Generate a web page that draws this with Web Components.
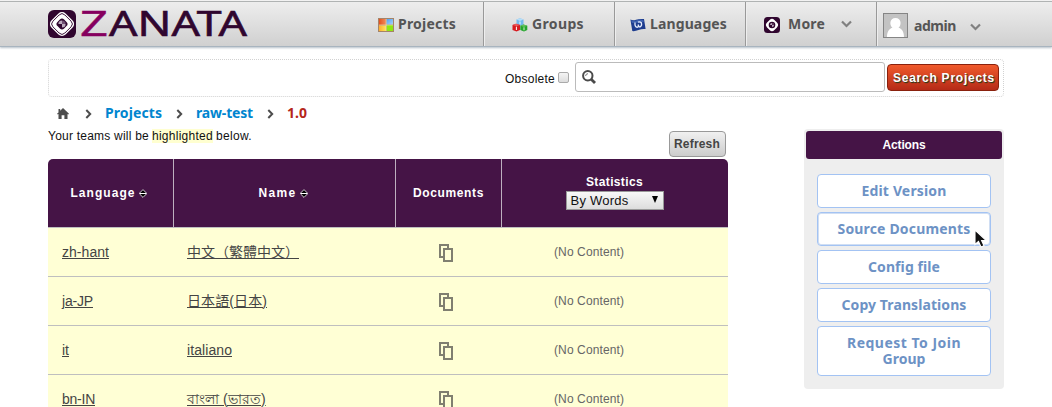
<!DOCTYPE html>
<html lang="en">
<head>
<meta charset="utf-8">
<title>Zanata: raw-test 1.0</title>
<style>
body { margin: 0; background: #fff; height: 407px; overflow: hidden; font: 12px "Liberation Sans", "Noto Sans CJK SC", sans-serif; color: #111; }
</style>
</head>
<body>
<zanata-page></zanata-page>
<script>
function component(name, html, setup) {
  customElements.define(name, class extends HTMLElement {
    connectedCallback() {
      if (this.shadowRoot) return;
      const root = this.attachShadow({ mode: "open" });
      const t = document.createElement("template");
      t.innerHTML = typeof html === "function" ? html(this) : html;
      root.append(t.content.cloneNode(true));
      if (setup) setup(this, root);
    }
  });
}

/* Icons, chosen by the "name" attribute */
const emblem = `
  <rect width="28" height="28" rx="6" fill="#30062f"/>
  <rect x="4" y="4" width="20" height="20" rx="5" transform="rotate(45 14 14)" fill="#fff"/>
  <rect x="5.600" y="5.600" width="16.800" height="16.800" rx="4" transform="rotate(45 14 14)" fill="none" stroke="#30062f" stroke-width=".9"/>
  <rect x="9.300" y="9.300" width="9.400" height="9.400" rx="3" transform="rotate(45 14 14)" fill="#30062f"/>
  <path d="M14 14V10.400A3.600 3.600 0 0 0 10.400 14ZM14 14V17.600A3.600 3.600 0 0 0 17.600 14Z" fill="#bba9bd"/>
  <path d="M14 14V10.400A3.600 3.600 0 0 1 17.600 14Z" fill="#705073"/>`;
const icons = {
  emblem: [28, 28, emblem],
  projects: [16, 14, `
    <defs><linearGradient id="r" x2="1"><stop stop-color="#e5501e"/><stop offset="1" stop-color="#f08c5c"/></linearGradient>
    <linearGradient id="b" x2="1" y2="1"><stop stop-color="#4f9fee"/><stop offset="1" stop-color="#a9d3fa"/></linearGradient>
    <linearGradient id="y" x2="1"><stop stop-color="#ffae2c"/><stop offset="1" stop-color="#ffe45a"/></linearGradient></defs>
    <rect width="16" height="14" fill="#a58468"/><rect x="1" y="1" width="7" height="6" fill="url(#r)"/>
    <rect x="8.500" y="1" width="6.500" height="5.500" fill="url(#b)"/><rect x="1" y="7.500" width="7" height="5.500" fill="url(#y)"/>
    <rect x="8.500" y="7" width="6.500" height="6" fill="#8fe812"/>
    <path d="M8.200 1V13M1 7H15" stroke="#f4e7bd" stroke-width=".6"/>`],
  groups: [16, 14, `
    <path d="M4.500 1.500L8 .3L11.500 1.500V6.500L8 8L4.500 6.500Z" fill="#73b9ed"/><path d="M4.500 1.500L8 .3L11.500 1.500L8 3Z" fill="#b7def8"/><path d="M8 3.500V6.500" stroke="#d9effc" stroke-width="1.200"/>
    <path d="M.5 7L4 5.800L8 7V12L4.500 13.500L.5 12Z" fill="#d71b20"/><path d="M.5 7L4 5.800L8 7L4.500 8.300Z" fill="#e85a5a"/><path d="M4.400 8.700V12" stroke="#fff" stroke-width="1"/>
    <path d="M8.300 7.800L11.500 6.500L15.300 7.800V12L12 13.500L8.300 12Z" fill="#24a52b"/><path d="M8.300 7.800L11.500 6.500L15.300 7.800L12 9Z" fill="#62bf5c"/><path d="M12 9.300V12.300" stroke="#d4f2d0" stroke-width="1"/>`],
  languages: [16, 14, `
    <path d="M.4 1.500Q3 2.800 6 1.700T14 1L15.600 11Q12 10.500 8.500 12T2.300 13Z" fill="#1d3c8e"/>
    <path d="M1 2.200Q4 3.300 7 2.200T13.400 2L13.800 4Q8 5 2 5Z" fill="#3d60ae"/>
    <path d="M5 4.500Q4.600 9.300 7.200 9.300Q8.600 9.300 8.300 6.500Q8.600 9.300 10.200 8.800Q12.300 8 11.300 4.800Q10 3.300 8 4.200" fill="none" stroke="#e6edfc" stroke-width="1.300"/>`],
  more: [16, 16, `<rect width="16" height="16" rx="3.500" fill="#30062f"/>
    <rect x="2.800" y="2.800" width="10.400" height="10.400" rx="3.400" transform="rotate(45 8 8)" fill="#fff"/>
    <circle cx="8" cy="8" r="3.300" fill="#30062f"/><path d="M8 8V6A2 2 0 0 0 6 8ZM8 8V10A2 2 0 0 0 10 8Z" fill="#bba9bd"/><circle cx="9" cy="7" r=".8" fill="#8a6e8c"/>`],
  avatar: [25, 25, `<rect x=".5" y=".5" width="24" height="24" fill="#c3c3c3" stroke="#858585"/>
    <path d="M4 24C4 18.500 6.500 15.500 9.500 14.800C6.300 12.500 6.300 5 12.500 5S18.700 12.500 15.500 14.800C18.500 15.500 21 18.500 21 24Z" fill="#fff"/>`],
  down: [11, 8, `<path d="M1 1.500L5.500 6L10 1.500" fill="none" stroke="#808080" stroke-width="2.200"/>`],
  right: [7, 10, `<path d="M1.300 1L5.200 5L1.300 9" fill="none" stroke="#4d4d4d" stroke-width="2"/>`],
  home: [12, 11, `<path d="M6 0L12 5.800L11.200 6.600L10.500 6V11H7.400V7.300H4.600V11H1.500V6L.8 6.600L0 5.800L1.500 4.400V1H3.200V2.700Z" fill="#4d4d4d"/>`],
  search: [14, 14, `<circle cx="5.800" cy="5.800" r="4.700" fill="none" stroke="#4a4a4a" stroke-width="2"/><path d="M9.200 9.200L13 13" stroke="#4a4a4a" stroke-width="2.800"/><path d="M3.600 6A2.400 2.400 0 0 1 6 3.700" fill="none" stroke="#666" stroke-width=".9"/>`],
  sort: [8, 9, `<path d="M4 .6L7.400 4V5L4 8.400L.6 5V4Z" fill="#000" stroke="#e8e0e8" stroke-width=".9"/><path d="M1 4.500H7" stroke="#fff"/>`],
  docs: [14, 18, `<path d="M4 13H1V1H9V4" fill="none" stroke="#807f70" stroke-width="2"/><path d="M5 5H13V17H5Z" fill="none" stroke="#807f70" stroke-width="2"/>`],
  pointer: [14, 19, `<path d="M1 1V15.500L4.500 12.500L7 18L10 16.700L7.600 11.500H12.300Z" fill="#111" stroke="#fff" stroke-width="1.100"/>`]
};
component("z-icon", el => {
  const [w, h, art] = icons[el.getAttribute("name")];
  return `<style>:host{display:block;flex:none;width:${w}px;height:${h}px}svg{display:block}</style>
  <svg width="${w}" height="${h}" viewBox="0 0 ${w} ${h}">${art}</svg>`;
});

/* Wordmark */
component("zanata-logo", `<style>
  :host{display:flex;gap:5px;align-items:center;width:200px;height:28px}
  svg{display:block;overflow:visible}
  text{font-family:"Noto Sans",sans-serif;font-size:34px}
  </style><z-icon name="emblem"></z-icon>
  <svg width="167" height="28"><text x="-1" y="26.300" fill="#86005f" textLength="28" lengthAdjust="spacingAndGlyphs" stroke="#86005f" stroke-width=".4">Z</text><text x="28" y="26.300" fill="#30062f" stroke="#30062f" stroke-width=".6" textLength="138" lengthAdjust="spacingAndGlyphs">ANATA</text></svg>`);

/* Top navigation */
component("nav-item", `<style>
  :host{display:flex;box-sizing:border-box;width:131px;height:44px;align-items:center;border-left:1px solid #999;box-shadow:inset 1px 0 #eee;
  font:bold 14px/20px "Noto Sans",sans-serif;color:#555;gap:4px}
  </style><slot></slot>`);
component("top-bar", `<style>
  :host{display:flex;box-sizing:border-box;height:47px;padding-left:48px;align-items:center;
   background:linear-gradient(#eee,#d0d0d0);border-top:1px solid #f2f2f2;border-bottom:1px solid #a8b4bf;
   box-shadow:inset 0 1px #b0b3b3,0 1px 2px #b6c0c9}
  nav{display:flex;margin:1px 0 0 auto}
  nav-item:first-child{border-color:transparent;box-shadow:none;padding-left:25px}
  nav-item>z-icon:first-child{margin-top:2px}
  .g{padding-left:28px}.l{padding-left:15px}.m{padding-left:18px;gap:8px}.m z-icon+z-label+z-icon{margin-left:8px}
  .u{width:176px;padding-left:6px;gap:6px}.u z-label{position:relative;top:2px}.u z-icon:last-child{margin:5px 0 0 8px}
  </style>
  <zanata-logo></zanata-logo>
  <nav>
  <nav-item><z-icon name="projects"></z-icon><z-label w="58">Projects</z-label></nav-item>
  <nav-item class="g"><z-icon name="groups"></z-icon><z-label w="52">Groups</z-label></nav-item>
  <nav-item class="l"><z-icon name="languages"></z-icon><z-label w="77">Languages</z-label></nav-item>
  <nav-item class="m"><z-icon name="more"></z-icon><z-label w="37">More</z-label><z-icon name="down"></z-icon></nav-item>
  <nav-item class="u"><z-icon name="avatar"></z-icon><z-label w="42">admin</z-label><z-icon name="down"></z-icon></nav-item>
  </nav>`);

/* Project search */
component("search-bar", `<style>
  :host{display:flex;box-sizing:border-box;width:956px;height:38px;margin:12px 0 0 48px;border:1px dotted #d2d2d2;border-radius:4px;
   justify-content:flex-end;align-items:center;padding-right:4px}
  z-label{margin-top:1px}
  input{appearance:none;width:11px;height:11px;margin:0 6px 2px 3px;border:1px solid #aaa;border-radius:2px;background:linear-gradient(#f4f4f4,#ddd)}
  .field{box-sizing:border-box;width:310px;height:30px;margin-right:2px;margin-top:-2px;border:1px solid #bbb;border-radius:3px;padding:7px 6px}
  button{box-sizing:border-box;width:112px;height:27px;margin-top:-1px;padding:0 5px;border:1px solid #8a210d;border-radius:4px;background:linear-gradient(#f05a2c,#b52a17);
   font:bold 12px/24px "Liberation Sans",sans-serif;color:#fff;text-shadow:1px 1px 1px #14381a;text-align:left}
  button z-label{margin:0}
  </style><z-label w="50">Obsolete</z-label><input type="checkbox"><div class="field"><z-icon name="search"></z-icon></div>
  <button><z-label w="102">Search Projects</z-label></button>`);

component("bread-crumbs", `<style>
  :host{display:flex;align-items:center;height:20px;padding-left:9px;margin-top:6px;font:bold 14px/20px "Noto Sans",sans-serif;color:#0085cf}
  z-icon{margin:2px 13px 0 14px} z-icon:first-of-type{margin:1px 2px 0 0}
  .now{color:#b5261a}
  </style><z-icon name="home"></z-icon><z-icon name="right"></z-icon><z-label w="57">Projects</z-label>
  <z-icon name="right"></z-icon><z-label w="57">raw-test</z-label><z-icon name="right"></z-icon><z-label class="now" w="20">1.0</z-label>`);

/* Languages table */
component("head-cell", `<style>
  :host{display:flex;align-items:center;justify-content:center;gap:3px;box-sizing:border-box;border-left:1px solid #bdb0bf;height:68px;
  font:bold 12px/16px "Liberation Sans",sans-serif;color:#fff}
  :host(.first){border:0}
  </style><slot></slot>`);
component("language-row", el => `<style>
  :host{display:grid;grid-template-columns:125px 222px 106px 227px;height:48px;border-top:1px solid #bfbfbf;background:#ffffd5;align-items:center;color:#444}
  a{font-size:14px;line-height:20px;padding-left:14px;margin-top:-1px;white-space:nowrap}
  a z-label{text-decoration:underline;text-underline-offset:1px;text-decoration-thickness:1px}
  z-icon{margin:2px auto 0 44px}
  .stat{padding-left:53px;color:#666;line-height:16px}
  </style><a><z-label w="${el.getAttribute("cw")}">${el.getAttribute("code")}</z-label></a>
  <a><z-label w="${el.getAttribute("nw")}">${el.getAttribute("label")}</z-label></a>
  <z-icon name="docs"></z-icon><div class="stat"><z-label w="70">(No Content)</z-label></div>`);
component("language-table", `<style>
  :host{display:block;width:680px}
  .head{display:grid;grid-template-columns:125px 222px 106px 227px;background:#451446;border-radius:5px 5px 0 0}
  .first{padding-right:4px}.name{padding-right:3px}
  .stats{flex-direction:column;gap:1px;padding:0 1px 2px 0}
  .select{display:flex;box-sizing:border-box;width:98px;height:19px;border:1px solid #999;background:linear-gradient(#f8f8f8,#ddd);
   font:13px/17px "Liberation Sans",sans-serif;color:#111;padding:0 5px 0 4px;justify-content:space-between;align-items:center}
  .select i{width:0;height:0;border:3.500px solid transparent;border-top:7px solid #000;border-bottom:0;margin-top:-2px}
  </style>
  <div class="head"><head-cell class="first"><z-label w="65">Language</z-label><z-icon name="sort"></z-icon></head-cell>
  <head-cell class="name"><z-label w="38">Name</z-label><z-icon name="sort"></z-icon></head-cell>
  <head-cell><z-label w="71">Documents</z-label></head-cell>
  <head-cell class="stats"><z-label w="57">Statistics</z-label><div class="select"><z-label w="58">By Words</z-label><i></i></div></head-cell></div>
  <language-row code="zh-hant" cw="47" label="中文（繁體中文）" nw="112"></language-row>
  <language-row code="ja-JP" cw="31" label="日本語(日本)" nw="80"></language-row>
  <language-row code="it" cw="7" label="italiano" nw="45"></language-row>
  <language-row code="bn-IN" cw="33" label="বাংলা (ভারত)" nw="79"></language-row>`);

/* Actions panel */
component("action-button", `<style>
  :host{display:flex;flex-direction:column;align-items:center;justify-content:center;box-sizing:border-box;width:174px;min-height:34px;
   border:1px solid #a3c3f3;border-radius:4px;background:#fff;font:bold 14px/16px "Noto Sans",sans-serif;color:#6d92c5;position:relative}
  :host([hover]){box-shadow:inset 0 0 0 1px #d0def3}
  :host([tall]){height:50px}
  ::slotted(z-icon){position:absolute;left:156px;top:16px}
  </style><slot></slot>`);
component("actions-panel", `<style>
  :host{display:flex;flex-direction:column;align-items:center;gap:4px;box-sizing:border-box;width:200px;height:260px;padding:2px;background:#eee;border-radius:4px}
  h3{display:flex;justify-content:center;align-items:center;width:196px;height:28px;margin:0 0 11px;border-radius:3px;background:#451446;color:#fff;font:bold 12px/16px "Liberation Sans",sans-serif}
  </style><h3><z-label w="43">Actions</z-label></h3>
  <action-button><z-label w="85">Edit Version</z-label></action-button>
  <action-button hover><z-label w="133">Source Documents</z-label><z-icon name="pointer"></z-icon></action-button>
  <action-button><z-label w="72">Config file</z-label></action-button>
  <action-button><z-label w="125">Copy Translations</z-label></action-button>
  <action-button tall><z-label w="114">Request To Join</z-label><z-label w="43">Group</z-label></action-button>`);

component("zanata-page", `<style>
  :host{display:block}
  main{display:flex;justify-content:space-between;width:956px;margin-left:48px}
  .left{width:680px}
  .intro{display:flex;height:36px;justify-content:space-between}
  .intro p{margin:6px 0 0;line-height:14px;white-space:nowrap;display:flex}
  mark{background:#ffffd0;color:inherit;margin:0 3px 0 3px;height:14px}
  button{box-sizing:border-box;width:57px;height:26px;margin:8px 2px 0 0;padding:0 0 0 4px;border:1px solid #999;border-radius:4px;
   background:linear-gradient(#f0f0f0,#ccc);font:bold 12px/22px "Liberation Sans",sans-serif;color:#444;text-align:left}
  actions-panel{margin-top:32px}
  </style>
  <top-bar></top-bar><search-bar></search-bar>
  <main><div class="left"><bread-crumbs></bread-crumbs>
  <div class="intro"><p><z-label w="101">Your teams will be</z-label><mark><z-label w="61">highlighted</z-label></mark><z-label w="36">below.</z-label></p><button><z-label w="46">Refresh</z-label></button></div>
  <language-table></language-table></div><actions-panel></actions-panel></main>`);

/* A single line of text, tracked so that it fills the width "w" */
component("z-label", `<style>:host{display:inline-block;white-space:nowrap}</style><span><slot></slot></span>`, (el, root) => {
  const w = +el.getAttribute("w"), span = root.querySelector("span");
  el.style.width = w + "px";
  const spread = (w - span.getBoundingClientRect().width) / [...el.textContent].length;
  span.style.letterSpacing = spread.toFixed(3) + "px";
});
</script>
</body>
</html>
